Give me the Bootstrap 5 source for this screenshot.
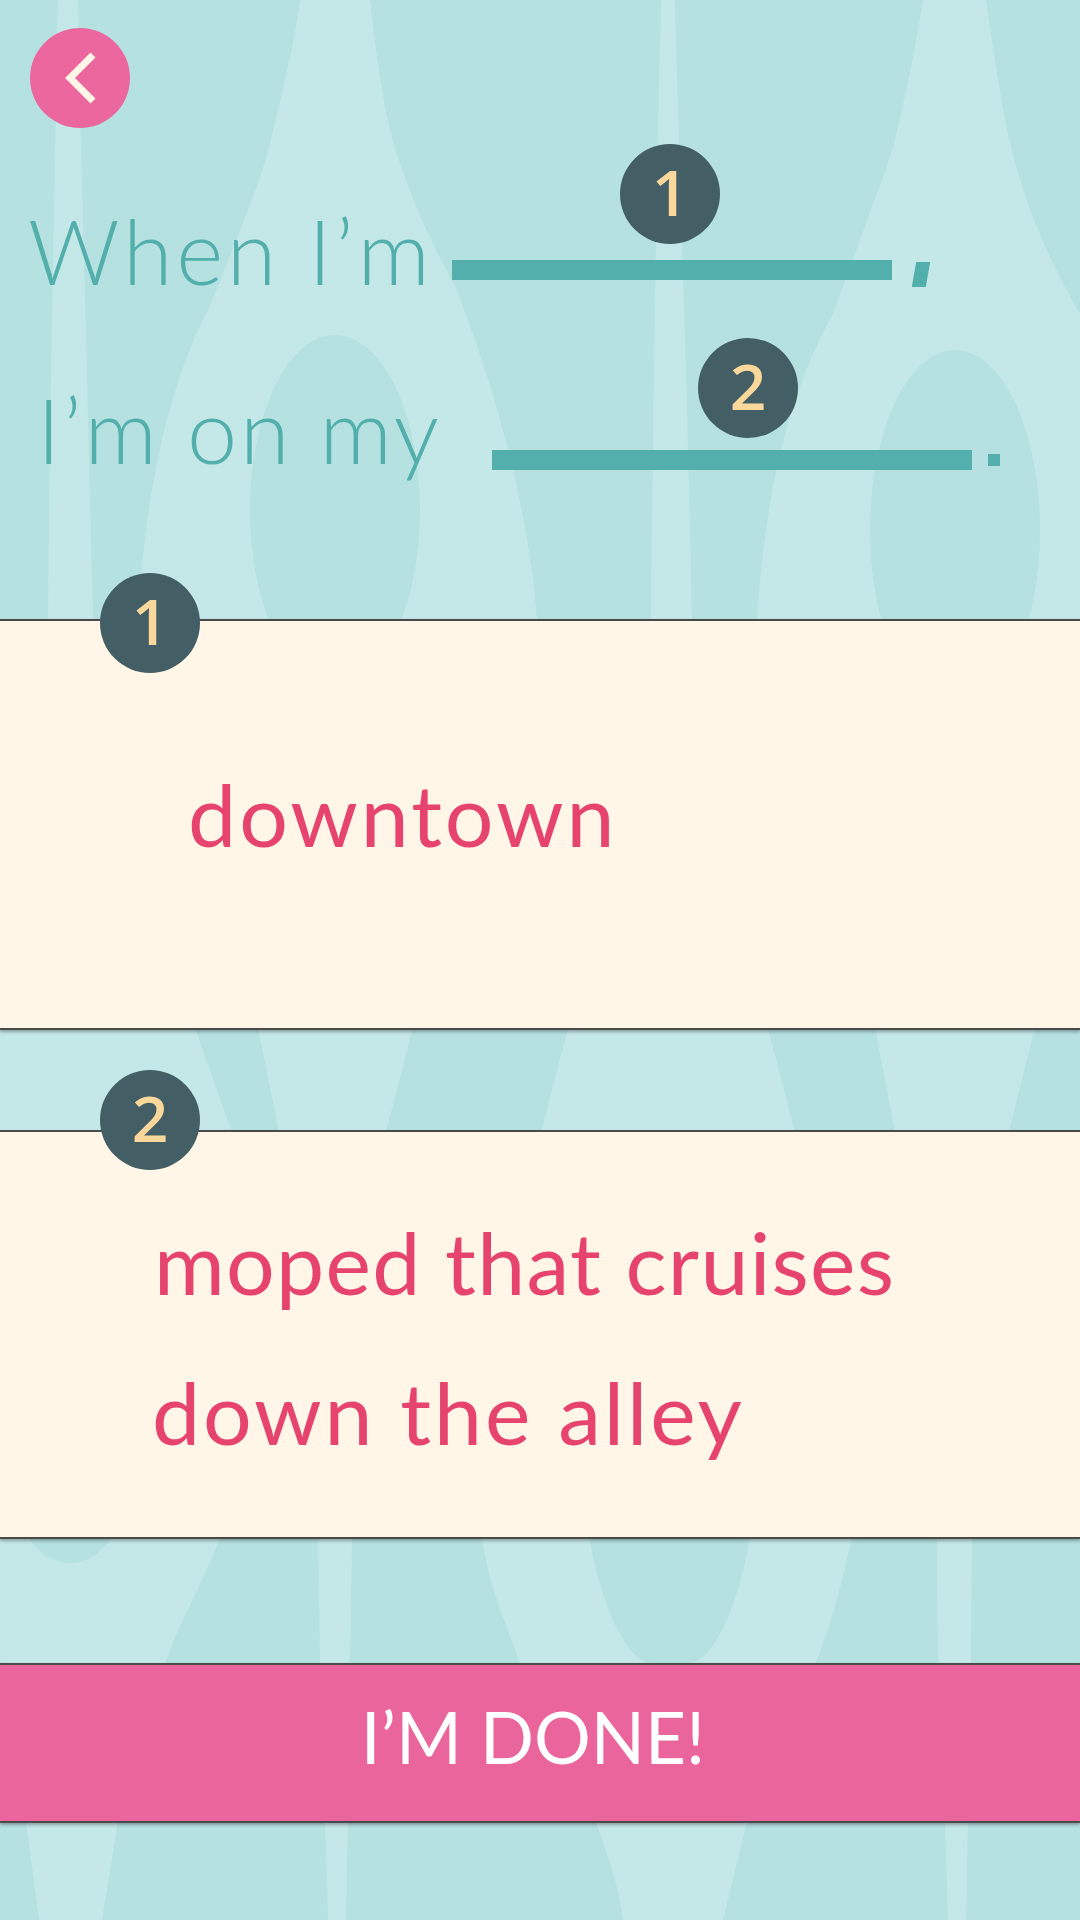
<!DOCTYPE html>
<html lang="en">
<head>
  <meta charset="UTF-8">
  <title>Fill in the blanks</title>
  <link href="https://cdn.jsdelivr.net/npm/bootstrap@5.3.0/dist/css/bootstrap.min.css" rel="stylesheet">
  <style>
    body { margin: 0; background: #b5e1e1; }
    .play-page { width: 1080px; height: 1920px; overflow: hidden; font-family: Lato, "Open Sans", sans-serif; }
    .bg-art { width: 1080px; height: 1920px; }
    .back-btn {
      width: 100px; height: 100px; margin: 28px 0 0 30px;
      background: #ec679d; border: 0; padding: 0;
    }
    .num-dot {
      width: 100px; height: 100px; padding-bottom: 4px; background: #435e65; color: #fad79b;
      font-family: "Open Sans", sans-serif; font-size: 64px; font-weight: 600; line-height: 1;
    }
    .sentence { color: #52afab; font-size: 90px; font-weight: 300; line-height: 1; white-space: nowrap; }
    .sentence-line { height: 140px; }
    .line-one { margin-top: 32px; padding-left: 28px; }
    .line-two { margin-top: 51px; padding-left: 37px; }
    .word-one { width: 406px; letter-spacing: 3.7px; margin-bottom: 5px; }
    .word-two { width: 402px; letter-spacing: 2.8px; margin-bottom: 17px; }
    .blank { height: 20px; background: #52afab; }
    .blank-one { width: 440px; margin: 0 0 20px 18px; }
    .blank-two { width: 480px; margin: 0 0 21px 53px; }
    .dot-on-one { top: -116px; left: 168px; }
    .dot-on-two { top: -112px; left: 206px; }
    .comma-mark { width: 14px; height: 25px; background: #52afab; margin: 0 0 13px 22px; transform: skewX(-10deg); }
    .stop-mark { width: 12px; height: 12px; background: #52afab; margin: 0 0 25px 16px; }
    .answer {
      background: #fff6e8; border-top: 2px solid #4a4a4a; border-bottom: 2px solid #4a4a4a;
      box-shadow: 0 2px 3px rgba(0,0,0,.3);
      color: #e6446e; font-size: 86px; line-height: 150px;
    }
    .answer-one { height: 411px; margin-top: 128px; padding-left: 188px; padding-bottom: 22px; letter-spacing: 3px; }
    .answer-two { height: 409px; margin-top: 100px; padding-left: 154px; padding-top: 4px; }
    .answer-one .dot-place { top: -48px; left: 100px; letter-spacing: 0; }
    .answer-two .dot-place { top: -62px; left: 100px; }
    .line-moped { letter-spacing: 1.3px; }
    .line-alley { letter-spacing: 2.9px; margin-left: -2px; }
    .done-btn {
      height: 160px; margin-top: 124px; padding: 0 14px 14px 0; background: #ea659b; color: #fff;
      border: 0; border-top: 2px solid #4a4a4a; border-bottom: 2px solid #4a4a4a; border-radius: 0;
      box-shadow: 0 2px 3px rgba(0,0,0,.3);
      font-size: 71px; font-weight: 400; line-height: 1;
    }
    .done-btn:hover { background: #ea659b; color: #fff; }
  </style>
</head>
<body>
  <div class="play-page position-relative">
    <!-- background drapes -->
    <svg class="bg-art position-absolute top-0 start-0" viewBox="0 0 1080 1920" aria-hidden="true">
      <g fill="#c4e7e7">
        <path d="M58 0L78 0C82 200 88 400 93 620L48 620C50 400 54 200 58 0Z"/>
        <path d="M300 0L370 0C378 70 385 115 396 151C415 210 435 250 455 286C500 400 530 520 537 620L138 620C145 490 170 380 210 306C240 230 262 180 272 135C285 80 295 40 300 0Z"/>
        <path d="M661 0L675 0C680 200 688 400 692 620L651 620C653 400 656 200 661 0Z"/>
        <path d="M923 0L986 0C995 60 1002 110 1012 151C1030 220 1055 270 1080 314L1080 620L757 620C765 490 790 390 833 314C860 240 882 180 892 151C905 100 915 50 923 0Z"/>
        <path d="M0 1028L195 1028L232 1132L0 1132Z"/>
        <path d="M258 1028L413 1028L386 1132L279 1132Z"/>
        <path d="M568 1028L768 1028L795 1132L541 1132Z"/>
        <path d="M875 1028L1035 1028L1009 1132L895 1132Z"/>
        <path d="M0 1538L220 1538C200 1590 180 1620 165 1664L0 1664Z"/>
        <path d="M318 1538L352 1538L350 1664L320 1664Z"/>
        <path d="M482 1538L852 1538C840 1590 830 1630 815 1664L520 1664C505 1620 490 1590 482 1538Z"/>
        <path d="M937 1538L972 1538L971 1664L938 1664Z"/>
        <path d="M26 1822L118 1822L102 1920L39 1920Z"/>
        <path d="M325 1822L348 1822L346 1920L328 1920Z"/>
        <path d="M596 1822L747 1822L723 1920L623 1920C618 1880 605 1850 596 1822Z"/>
        <path d="M945 1822L968 1822L966 1920L948 1920Z"/>
      </g>
      <g fill="#b5e1e1">
        <ellipse cx="335" cy="510" rx="85" ry="175"/>
        <ellipse cx="955" cy="530" rx="85" ry="180"/>
        <path d="M27 1536L113 1536C100 1555 85 1563 70 1563C55 1563 40 1555 27 1536Z"/>
        <path d="M589 1536L750 1536C740 1600 715 1664 685 1664L655 1664C625 1664 600 1600 589 1536Z"/>
      </g>
    </svg>

    <div class="position-relative">
      <button class="back-btn rounded-circle d-flex align-items-center justify-content-center" aria-label="Back">
        <svg width="36" height="54" viewBox="0 0 36 54"><path d="M31 4L8 27L31 50" fill="none" stroke="#fff6e8" stroke-width="7"/></svg>
      </button>

      <div class="sentence">
        <div class="sentence-line line-one d-flex align-items-end">
          <span class="word-one">When I’m</span>
          <div class="blank blank-one position-relative">
            <div class="num-dot dot-on-one position-absolute rounded-circle d-flex align-items-center justify-content-center">1</div>
          </div>
          <div class="comma-mark"></div>
        </div>
        <div class="sentence-line line-two d-flex align-items-end">
          <span class="word-two">I’m on my</span>
          <div class="blank blank-two position-relative">
            <div class="num-dot dot-on-two position-absolute rounded-circle d-flex align-items-center justify-content-center">2</div>
          </div>
          <div class="stop-mark"></div>
        </div>
      </div>

      <div class="answer answer-one position-relative d-flex align-items-center">
        <div class="num-dot dot-place position-absolute rounded-circle d-flex align-items-center justify-content-center">1</div>
        <div>downtown</div>
      </div>

      <div class="answer answer-two position-relative d-flex align-items-center">
        <div class="num-dot dot-place position-absolute rounded-circle d-flex align-items-center justify-content-center">2</div>
        <div>
          <div class="line-moped">moped that cruises</div>
          <div class="line-alley">down the alley</div>
        </div>
      </div>

      <button class="btn done-btn w-100 d-block">I’M DONE!</button>
    </div>
  </div>
  <script src="https://cdn.jsdelivr.net/npm/bootstrap@5.3.0/dist/js/bootstrap.bundle.min.js"></script>
</body>
</html>
